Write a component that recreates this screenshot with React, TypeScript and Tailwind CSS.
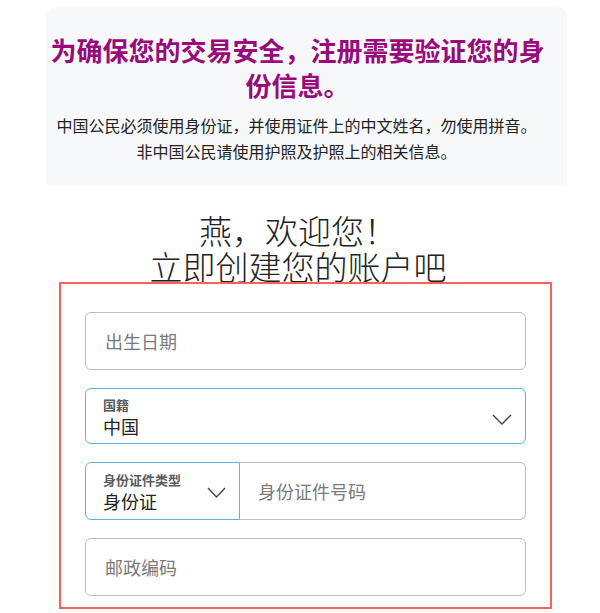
const cjk = { fontFamily: '"Noto Sans CJK SC", "Noto Sans", sans-serif' };

function Chevron(props: { width: number; height: number }) {
    return (
        <svg width={props.width} height={props.height} viewBox={`0 0 ${props.width} ${props.height}`} fill="none">
            <polyline
                points={`1,1 ${props.width / 2},${props.height - 1} ${props.width - 1},1`}
                stroke="#444"
                strokeWidth="1.4"
            />
        </svg>
    );
}

function TextField(props: { placeholder: string }) {
    return (
        <div className="h-[58px] rounded-md border border-[#bdbdbd] flex items-center pl-[19px]">
            <span className="text-[18px] text-[#7a7a7a]">{props.placeholder}</span>
        </div>
    );
}

function SelectValue(props: { label: string; value: string }) {
    return (
        <div className="flex flex-col">
            <span className="text-[13px] leading-[16px] font-bold text-[#5a5a5a]">{props.label}</span>
            <span className="mt-[3px] text-[18px] leading-[20px] text-[#222]">{props.value}</span>
        </div>
    );
}

export default function App() {
    return (
        <div className="w-[600px] h-[613px] bg-white overflow-hidden" style={cjk}>
            <div className="ml-[46px] mt-[7px] w-[521px] h-[178px] rounded-t-[10px] bg-[#f7f8fa] pt-[25px] pr-[20px] text-center">
                <h1 className="text-[26px] leading-[35px] font-bold text-[#990a7a] pl-[2px]">
                    为确保您的交易安全，注册需要验证您的身份信息。
                </h1>
                <p className="mt-[10px] text-[16px] leading-[26px] text-[#222]">
                    中国公民必须使用身份证，并使用证件上的中文姓名，勿使用拼音。
                    <br />
                    非中国公民请使用护照及护照上的相关信息。
                </p>
            </div>

            <div className="ml-[40px] w-[516px] mt-[27px] text-center text-[33px] leading-[36px] font-light text-[#222]">
                <div>燕，欢迎您！</div>
                <div>立即创建您的账户吧</div>
            </div>

            <div className="relative ml-[59px] -mt-[2px] w-[493px] h-[327px] border-2 border-[#ff5c5c] px-[24px] pt-[28px] flex flex-col gap-[18px]">
                <TextField placeholder="出生日期" />

                <div className="h-[56px] rounded-md border border-[#5cb3db] flex items-center justify-between pl-[17px] pr-[13px]">
                    <SelectValue label="国籍" value="中国" />
                    <div className="mt-[6px]">
                        <Chevron width={20} height={11} />
                    </div>
                </div>

                <div className="h-[58px] flex">
                    <div className="w-[155px] rounded-l-md border border-[#5cb3db] flex items-center justify-between pl-[17px] pr-[13px]">
                        <SelectValue label="身份证件类型" value="身份证" />
                        <div className="mt-[2px]">
                            <Chevron width={19} height={11} />
                        </div>
                    </div>
                    <div className="flex-1 rounded-r-md border border-l-0 border-[#bdbdbd] flex items-center pl-[18px]">
                        <span className="text-[18px] text-[#7a7a7a]">身份证件号码</span>
                    </div>
                </div>

                <TextField placeholder="邮政编码" />
            </div>
        </div>
    );
}
